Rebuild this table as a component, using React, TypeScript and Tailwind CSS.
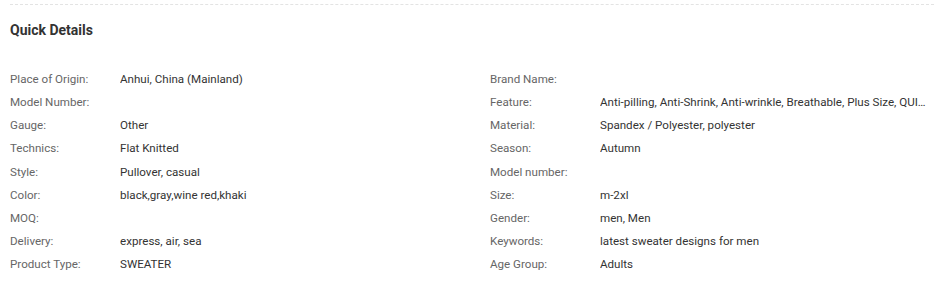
const left: [string, string][] = [
  ["Place of Origin:", "Anhui, China (Mainland)"],
  ["Model Number:", ""],
  ["Gauge:", "Other"],
  ["Technics:", "Flat Knitted"],
  ["Style:", "Pullover, casual"],
  ["Color:", "black,gray,wine red,khaki"],
  ["MOQ:", ""],
  ["Delivery:", "express, air, sea"],
  ["Product Type:", "SWEATER"],
]

const right: [string, string][] = [
  ["Brand Name:", ""],
  ["Feature:", "Anti-pilling, Anti-Shrink, Anti-wrinkle, Breathable, Plus Size, QUICK DRY, Sustainable"],
  ["Material:", "Spandex / Polyester, polyester"],
  ["Season:", "Autumn"],
  ["Model number:", ""],
  ["Size:", "m-2xl"],
  ["Gender:", "men, Men"],
  ["Keywords:", "latest sweater designs for men"],
  ["Age Group:", "Adults"],
]

function AttrList({ items }: { items: [string, string][] }) {
  return (
    <dl className="flex min-w-0 flex-col">
      {items.map(([name, value]) => (
        <div key={name} className="flex h-[23.125px] items-center text-[11.6px] leading-[23px]">
          <dt className="w-[110px] shrink-0 text-[#666]">{name}</dt>
          <dd className="min-w-0 flex-1 truncate text-[#333]">{value}</dd>
        </div>
      ))}
    </dl>
  )
}

export default function App() {
  return (
    <div className="min-h-screen bg-white font-['Roboto',sans-serif]">
      <section className="mx-[10px] mt-[4px] border-t border-dashed border-[#e3e3e3]">
        {/* 見出し */}
        <h3 className="pt-[15px] text-[14px] leading-[20px] font-bold text-[#333]">Quick Details</h3>

        {/* 属性一覧: 左右2カラム */}
        <div className="mt-[28px] grid grid-cols-[480px_minmax(0,1fr)]">
          <AttrList items={left} />
          <div className="min-w-0 pr-[4px]">
            <AttrList items={right} />
          </div>
        </div>
      </section>
    </div>
  )
}
